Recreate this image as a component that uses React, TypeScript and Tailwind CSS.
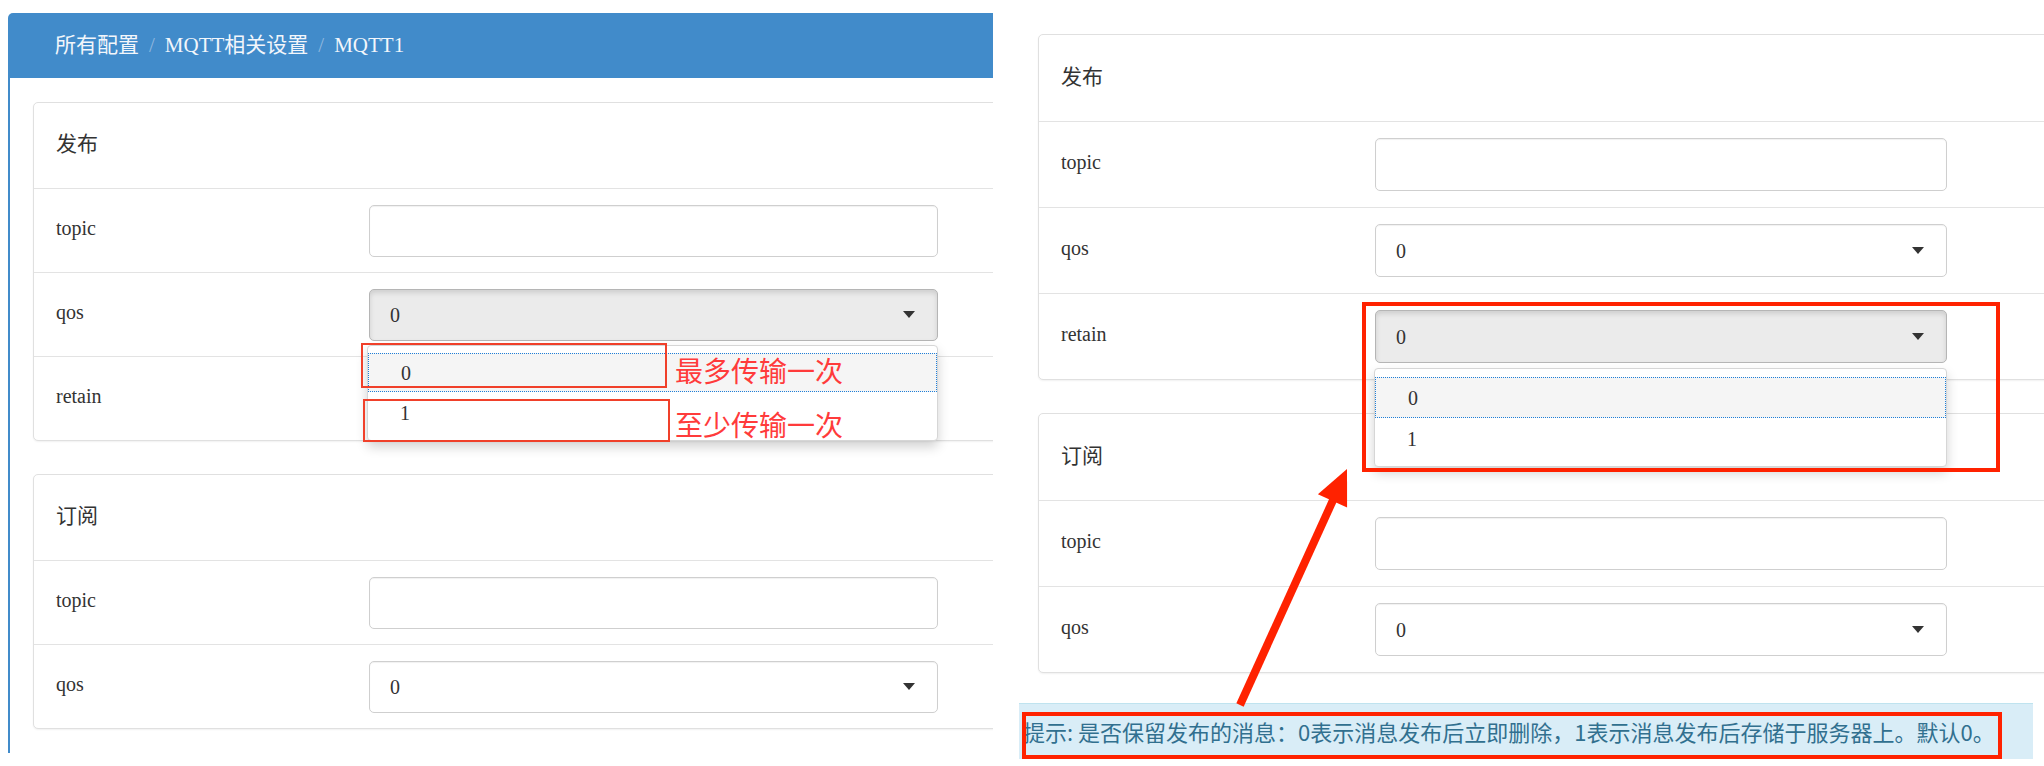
import React from "react";

const SERIF = "font-['Liberation_Serif','Noto_Sans_CJK_SC',serif]";
const CJK = "font-['Noto_Sans_CJK_SC','Liberation_Sans',sans-serif]";

type V = "L" | "R";

const cfg = {
  L: {
    card: "w-[1000px]",
    header: "h-[85px]",
    row: "h-[84px]",
    label: "w-[335px]",
    ctrl: "w-[569px] h-[52px]",
  },
  R: {
    card: "w-[1100px]",
    header: "h-[86px]",
    row: "h-[86px]",
    label: "w-[336px]",
    ctrl: "w-[572px] h-[53px]",
  },
};

function Caret() {
  return (
    <svg width="12" height="7" viewBox="0 0 12 7">
      <polygon points="0,0 12,0 6,7" fill="#333" />
    </svg>
  );
}

function Select({ v, active }: { v: V; active?: boolean }) {
  const c = cfg[v];
  return (
    <div
      className={`${c.ctrl} rounded-[5px] border flex items-center justify-between pl-[20px] pr-[22px] ${
        active
          ? "bg-[#ebebeb] border-[#b5b5b5] shadow-[inset_0_3px_5px_rgba(0,0,0,0.12)]"
          : "bg-white border-[#cfcfcf] shadow-[inset_0_1px_1px_rgba(0,0,0,0.06)]"
      }`}
    >
      <span className={`${SERIF} text-[20px] text-[#333]`}>0</span>
      <Caret />
    </div>
  );
}

function Input({ v }: { v: V }) {
  const c = cfg[v];
  return (
    <div
      className={`${c.ctrl} rounded-[5px] border border-[#cfcfcf] bg-white shadow-[inset_0_1px_1px_rgba(0,0,0,0.06)]`}
    />
  );
}

function Row({ v, label, children }: { v: V; label: string; children: React.ReactNode }) {
  const c = cfg[v];
  return (
    <div className={`${c.row} border-t border-[#e3e3e3] flex items-center`}>
      <div className={`${c.label} pl-[22px] pb-[5px] ${SERIF} text-[20px] text-[#333]`}>{label}</div>
      {children}
    </div>
  );
}

function Card({ v, title, children }: { v: V; title: string; children: React.ReactNode }) {
  const c = cfg[v];
  return (
    <div
      className={`${c.card} rounded-[5px] border border-[#e0e0e0] bg-white shadow-[0_1px_2px_rgba(0,0,0,0.06)]`}
    >
      <div className={`${c.header} flex items-center pl-[22px] pb-[5px] ${CJK} text-[21px] text-[#333]`}>{title}</div>
      {children}
    </div>
  );
}

function Forms({ v }: { v: V }) {
  return (
    <div className="flex flex-col gap-[33px]">
      <Card v={v} title="发布">
        <Row v={v} label="topic">
          <Input v={v} />
        </Row>
        <Row v={v} label="qos">
          <Select v={v} active={v === "L"} />
        </Row>
        <Row v={v} label="retain">
          <Select v={v} active={v === "R"} />
        </Row>
      </Card>
      <Card v={v} title="订阅">
        <Row v={v} label="topic">
          <Input v={v} />
        </Row>
        <Row v={v} label="qos">
          <Select v={v} />
        </Row>
      </Card>
    </div>
  );
}

function Dropdown({ pos, first, second }: { pos: string; first: string; second: string }) {
  return (
    <div
      className={`absolute ${pos} rounded-[4px] border border-[#d6d6d6] bg-white shadow-[0_6px_12px_rgba(0,0,0,0.18)]`}
    >
      <div className={`${first} border border-dotted border-[#1f7fd8] bg-[#f5f5f5] flex items-center pl-[32px] ${SERIF} text-[20px] text-[#333]`}>
        0
      </div>
      <div className={`${second} flex items-center pl-[32px] ${SERIF} text-[20px] text-[#333]`}>1</div>
    </div>
  );
}

export default function App() {
  return (
    <div className="relative w-[2044px] h-[766px] overflow-hidden bg-white flex">
      {/* Left screenshot */}
      <div className="w-[993px] h-full overflow-hidden pt-[13px] pl-[8px] shrink-0">
        <div className="w-[1100px]">
          <div className={`h-[65px] bg-[#418bca] rounded-tl-[5px] flex items-center pl-[47px] ${SERIF} text-[21px] text-[#f2f6fb]`}>
            <span>所有配置</span>
            <span className="px-[10px] text-[#8fb7df]">/</span>
            <span>MQTT相关设置</span>
            <span className="px-[10px] text-[#8fb7df]">/</span>
            <span>MQTT1</span>
          </div>
          <div className="h-[675px] border-l-2 border-[#418bca] pt-[24px] pl-[23px]">
            <Forms v="L" />
          </div>
        </div>
      </div>

      {/* Right screenshot */}
      <div className="flex-1 h-full overflow-hidden pt-[34px] pl-[26px]">
        <div className="ml-[19px]">
          <Forms v="R" />
        </div>
        <div className="mt-[30px] w-[1014px] h-[56px] bg-[#d9edf7] border-t border-[#bfe3ef] flex items-center pl-[4px]">
          <span className={`${CJK} text-[22px] text-[#31708f] whitespace-nowrap`}>
            提示: 是否保留发布的消息：0表示消息发布后立即删除，1表示消息发布后存储于服务器上。默认0。
          </span>
        </div>
      </div>

      {/* Open dropdowns */}
      <Dropdown pos="left-[367px] top-[345px] w-[571px] h-[96px] pt-[7px]" first="h-[39px]" second="h-[41px]" />
      <Dropdown pos="left-[1374px] top-[368px] w-[573px] h-[99px] pt-[8px]" first="h-[41px]" second="h-[41px]" />

      {/* Annotations left */}
      <div className="absolute left-[361px] top-[343px] w-[306px] h-[45px] border-2 border-[#f0402a]" />
      <div className="absolute left-[363px] top-[399px] w-[307px] h-[43px] border-2 border-[#f0402a]" />
      <div className={`absolute left-[675px] top-[352px] ${CJK} text-[28px] leading-[36px] text-[#ff3b3b]`}>最多传输一次</div>
      <div className={`absolute left-[675px] top-[406px] ${CJK} text-[28px] leading-[36px] text-[#ff3b3b]`}>至少传输一次</div>

      {/* Annotations right */}
      <div className="absolute left-[1362px] top-[302px] w-[638px] h-[170px] border-4 border-[#ff2200]" />
      <div className="absolute left-[1022px] top-[712px] w-[980px] h-[47px] border-4 border-[#ff2200]" />
      <svg className="absolute left-[1200px] top-[440px]" width="200" height="300" viewBox="0 0 200 300">
        <line x1="40" y1="265" x2="134" y2="58" stroke="#ff2200" strokeWidth="8" />
        <polygon points="147,29 147.1,67.5 117.9,54.3" fill="#ff2200" />
      </svg>
    </div>
  );
}
